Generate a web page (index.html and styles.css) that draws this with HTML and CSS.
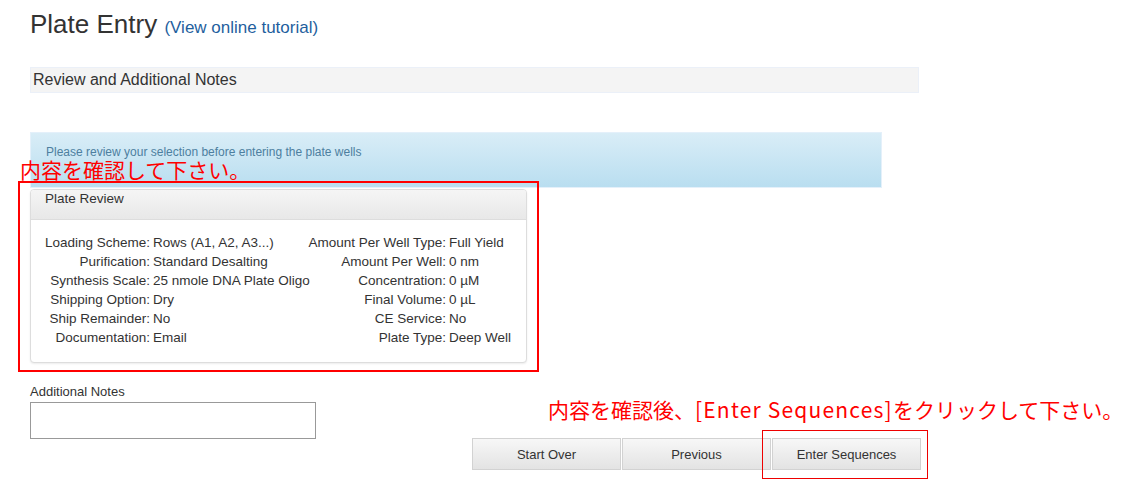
FILE: index.html
```html
<!DOCTYPE html>
<html lang="en">
<head>
  <meta charset="UTF-8">
  <title>Plate Entry</title>
  <link rel="stylesheet" href="styles.css">
</head>
<body>
  <div class="page">
    <h1 class="title">Plate Entry <a href="#" class="tutorial">(View online tutorial)</a></h1>

    <div class="step-bar">Review and Additional Notes</div>

    <div class="alert-info">Please review your selection before entering the plate wells</div>

    <div class="panel">
      <div class="panel-heading">Plate Review</div>
      <div class="panel-body">
        <span class="lbl">Loading Scheme:</span><span class="val">Rows (A1, A2, A3...)</span>
        <span class="lbl">Amount Per Well Type:</span><span class="val">Full Yield</span>

        <span class="lbl">Purification:</span><span class="val">Standard Desalting</span>
        <span class="lbl">Amount Per Well:</span><span class="val">0 nm</span>

        <span class="lbl">Synthesis Scale:</span><span class="val">25 nmole DNA Plate Oligo</span>
        <span class="lbl">Concentration:</span><span class="val">0 µM</span>

        <span class="lbl">Shipping Option:</span><span class="val">Dry</span>
        <span class="lbl">Final Volume:</span><span class="val">0 µL</span>

        <span class="lbl">Ship Remainder:</span><span class="val">No</span>
        <span class="lbl">CE Service:</span><span class="val">No</span>

        <span class="lbl">Documentation:</span><span class="val">Email</span>
        <span class="lbl">Plate Type:</span><span class="val">Deep Well</span>
      </div>
    </div>

    <label class="notes-label" for="notes">Additional Notes</label>
    <textarea id="notes" class="notes"></textarea>

    <div class="actions">
      <button class="btn">Start Over</button>
      <button class="btn">Previous</button>
      <button class="btn">Enter Sequences</button>
    </div>
  </div>

  <!-- annotations drawn on top of the screenshot -->
  <div class="note note-review">内容を確認して下さい。</div>
  <div class="mark mark-review"></div>
  <div class="note note-enter">内容を確認後、<span class="latin">[Enter Sequences]</span>をクリックして下さい。</div>
  <div class="mark mark-enter"></div>
</body>
</html>
```

FILE: styles.css
```css
body {
  margin: 0;
  padding-top: 1px;
  font-family: "Liberation Sans", Arial, sans-serif;
  color: #333;
  background: #fff;
  position: relative;
  min-height: 488px;
}

.page {
  padding: 0 30px;
}

.title {
  margin: 8px 0 28px;
  font-size: 26px;
  line-height: 30px;
  font-weight: normal;
  color: #333;
}

.tutorial {
  font-size: 17px;
  line-height: 17px;
  color: #1f5f9e;
  text-decoration: none;
}

.step-bar {
  width: 889px;
  box-sizing: border-box;
  height: 26px;
  line-height: 24px;
  padding: 0 2px;
  font-size: 16px;
  background: #f4f4f4;
  border: 1px solid #ebf0f8;
}

.alert-info {
  margin-top: 39px;
  width: 852px;
  box-sizing: border-box;
  padding: 12px 15px 28px;
  font-size: 12px;
  line-height: 14px;
  color: #4d7f9f;
  background: linear-gradient(#d9edf7, #b9def0);
  border: 1px solid #e4f0fa;
}

.panel {
  margin-top: 1px;
  width: 497px;
  box-sizing: border-box;
  border: 1px solid #ddd;
  border-radius: 4px;
  box-shadow: 0 1px 2px rgba(0,0,0,0.08);
  background: #fff;
}

.panel-heading {
  padding: 0 14px 12px;
  line-height: 17px;
  font-size: 13.5px;
  background: linear-gradient(#f5f5f5, #e8e8e8);
  border-bottom: 1px solid #ddd;
  border-radius: 3px 3px 0 0;
}

.panel-body {
  display: grid;
  grid-template-columns: 105px 150px 140px 1fr;
  column-gap: 3px;
  padding: 13px 14px 15px;
  font-size: 13.5px;
  line-height: 19px;
  white-space: nowrap;
}

.lbl {
  text-align: right;
}

.notes-label {
  display: block;
  margin-top: 21px;
  font-size: 13px;
  line-height: 15px;
}

.notes {
  display: block;
  margin-top: 3px;
  width: 286px;
  height: 37px;
  box-sizing: border-box;
  border: 1px solid #999;
  resize: none;
}

.actions {
  display: flex;
  gap: 1px;
  margin-top: -1px;
  padding-left: 442px;
}

.btn {
  width: 149px;
  height: 32px;
  font-family: "Liberation Sans", Arial, sans-serif;
  font-size: 13px;
  color: #333;
  background: linear-gradient(#f7f7f7, #e3e3e3);
  border: 1px solid #d2d2d2;
  border-radius: 0;
}

/* red annotations */
.note {
  position: absolute;
  font-family: "Noto Sans CJK JP", sans-serif;
  font-size: 21px;
  line-height: 20px;
  color: #f00;
  white-space: nowrap;
}

.note .latin {
  letter-spacing: 1.2px;
}

.note-review {
  left: 20px;
  top: 159px;
}

.note-enter {
  left: 548px;
  top: 399px;
}

.mark {
  position: absolute;
  box-sizing: border-box;
}

.mark-review {
  left: 18px;
  top: 181px;
  width: 521px;
  height: 191px;
  border: 2px solid #f00;
}

.mark-enter {
  left: 762px;
  top: 430px;
  width: 166px;
  height: 49px;
  border: 1px solid #e00;
}
```
